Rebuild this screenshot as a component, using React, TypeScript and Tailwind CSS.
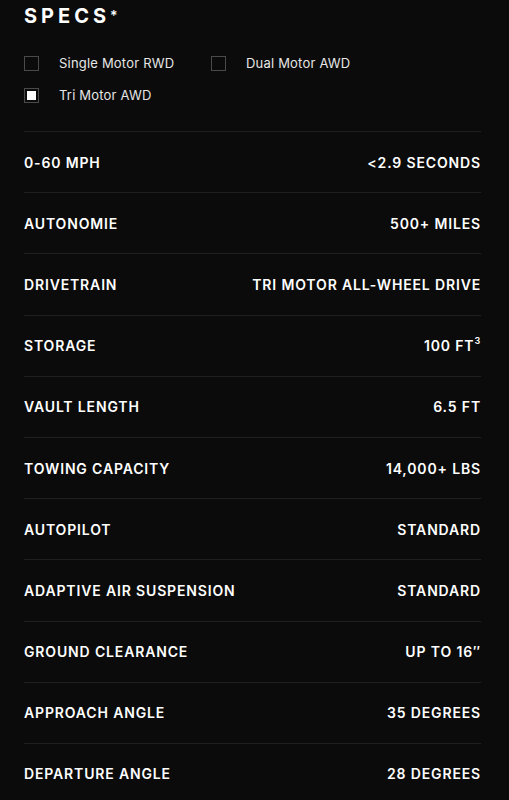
const specs: [string, React.ReactNode][] = [
  ["0-60 MPH", "<2.9 SECONDS"],
  ["AUTONOMIE", "500+ MILES"],
  ["DRIVETRAIN", "TRI MOTOR ALL-WHEEL DRIVE"],
  [
    "STORAGE",
    <>
      100 FT<span className="text-[9px] align-top leading-none relative top-[1px]">3</span>
    </>,
  ],
  ["VAULT LENGTH", "6.5 FT"],
  ["TOWING CAPACITY", "14,000+ LBS"],
  ["AUTOPILOT", "STANDARD"],
  ["ADAPTIVE AIR SUSPENSION", "STANDARD"],
  ["GROUND CLEARANCE", "UP TO 16\u2033"],
  ["APPROACH ANGLE", "35 DEGREES"],
  ["DEPARTURE ANGLE", "28 DEGREES"],
];

function Check({ label, checked }: { label: string; checked?: boolean }) {
  return (
    <div className="flex items-center gap-[20px]">
      <div className="w-[15px] h-[15px] border border-[#4a4a4a] flex items-center justify-center">
        {checked && <div className="w-[9px] h-[9px] bg-white" />}
      </div>
      <span className="text-[13px] text-[#e6e6e6] tracking-[0.2px]">{label}</span>
    </div>
  );
}

export default function App() {
  return (
    <div
      className="w-[509px] h-[800px] overflow-hidden bg-[#0b0b0b] pl-6 pr-7 text-white"
      style={{ fontFamily: "Inter, 'Noto Sans', sans-serif" }}
    >
      <h2 className="pt-[3px] text-[20px] font-bold tracking-[4px] leading-[26px]">
        SPECS<span className="text-[14px] align-top font-semibold">*</span>
      </h2>

      {/* Variant picker */}
      <div className="mt-[25px] grid grid-cols-[187px_1fr] gap-y-[12px]">
        <Check label="Single Motor RWD" />
        <Check label="Dual Motor AWD" />
        <Check label="Tri Motor AWD" checked />
      </div>

      {/* Spec rows */}
      <div className="mt-[26px]">
        {specs.map(([k, v]) => (
          <div
            key={k}
            className="h-[61.2px] border-t border-[#1f1f1f] flex items-center justify-between text-[14px] font-semibold tracking-[0.85px]"
          >
            <span>{k}</span>
            <span>{v}</span>
          </div>
        ))}
      </div>
    </div>
  );
}
